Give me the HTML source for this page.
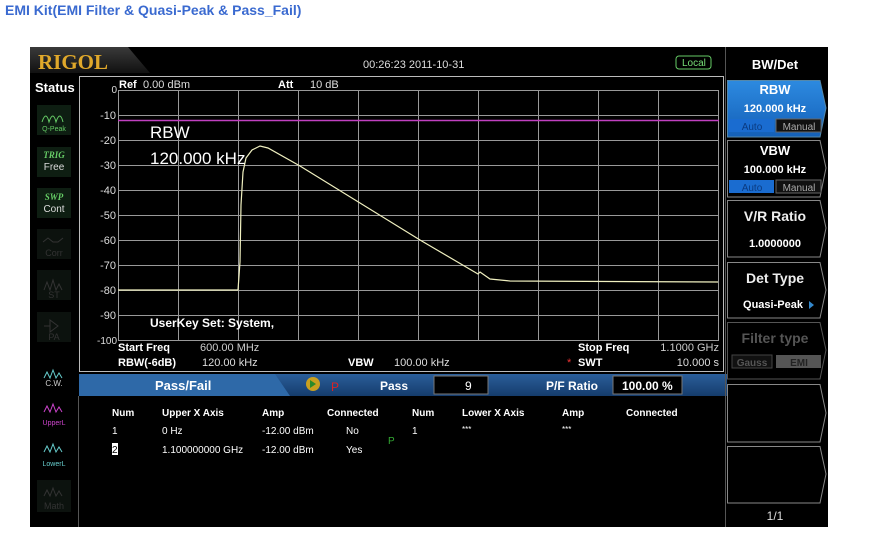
<!DOCTYPE html>
<html><head><meta charset="utf-8"><style>
body{margin:0;background:#fff;width:872px;height:548px;overflow:hidden;font-family:"Liberation Sans",sans-serif}
</style></head><body>
<svg width="872" height="548" xmlns="http://www.w3.org/2000/svg" font-family="Liberation Sans, sans-serif">
<rect width="872" height="548" fill="#fff"/>
<text x="5" y="15" font-size="14" font-weight="bold" fill="#3a6ad0">EMI  Kit(EMI Filter &amp; Quasi-Peak &amp; Pass_Fail)</text>
<rect x="30" y="47" width="798" height="480" fill="#000"/>
<defs>
<linearGradient id="tb" x1="0" y1="0" x2="0" y2="1"><stop offset="0" stop-color="#3a3a3a"/><stop offset="1" stop-color="#111"/></linearGradient>
<linearGradient id="bl" x1="0" y1="0" x2="0" y2="1"><stop offset="0" stop-color="#2a5e9a"/><stop offset="1" stop-color="#153c6c"/></linearGradient>
<linearGradient id="btn" x1="0" y1="0" x2="0" y2="1"><stop offset="0" stop-color="#2d8ae0"/><stop offset="1" stop-color="#1460b8"/></linearGradient>
</defs>
<path d="M30 47 H128 L150 73 H30Z" fill="url(#tb)"/>
<text x="38" y="69" font-family="Liberation Serif,serif" font-size="21" font-weight="bold" fill="#e0a82a">RIGOL</text>
<text x="363" y="68" font-size="11" fill="#ddd">00:26:23 2011-10-31</text>
<rect x="676" y="56" width="35" height="13" rx="3" fill="none" stroke="#6c6" stroke-width="1"/>
<text x="682" y="66" font-size="10" fill="#7d7">Local</text>
<text x="35" y="92" font-size="13" font-weight="bold" fill="#fff">Status</text>
<g font-size="9" text-anchor="middle">
<rect x="37" y="105" width="34" height="30" fill="#0e1e12"/>
<path d="M42 122 q4-12 7 0 q4-12 7 0 q4-12 7 0" stroke="#6c6" fill="none"/><text x="54" y="131" fill="#6c6" font-size="7">Q-Peak</text>
<rect x="37" y="147" width="34" height="30" fill="#0e1e12"/>
<text x="54" y="158" fill="#6c6" font-style="italic" font-weight="bold" font-family="Liberation Serif,serif">TRIG</text><text x="54" y="170" fill="#ddd" font-size="10">Free</text>
<rect x="37" y="188" width="34" height="30" fill="#0e1e12"/>
<text x="54" y="200" fill="#6c6" font-style="italic" font-weight="bold" font-family="Liberation Serif,serif">SWP</text><text x="54" y="212" fill="#ddd" font-size="10">Cont</text>
<rect x="37" y="229" width="34" height="30" fill="#0c120e"/><text x="54" y="256" fill="#333">Corr</text><path d="M43 242 l5-4 5 4 5 0 5-4" stroke="#333" fill="none"/>
<rect x="37" y="270" width="34" height="30" fill="#0c120e"/><text x="54" y="298" fill="#333">ST</text><path d="M44 290 l3-8 3 8 3-10 3 10 3-6 3 6" stroke="#333" fill="none"/>
<rect x="37" y="312" width="34" height="30" fill="#0c120e"/><text x="54" y="340" fill="#333">PA</text><path d="M44 326 h6 v-6 l8 6 -8 6 v-6" stroke="#333" fill="none"/>
<path d="M44 378 l3-6 3 6 3-8 3 8 3-5 3 5" stroke="#6cc" fill="none"/><text x="54" y="386" fill="#ccc" font-size="8">C.W.</text>
<path d="M44 412 l3-6 3 6 3-8 3 8 3-5 3 5" stroke="#c4c" fill="none"/><text x="54" y="425" fill="#c4c" font-size="7">UpperL</text>
<path d="M44 452 l3-6 3 6 3-8 3 8 3-5 3 5" stroke="#6cc" fill="none"/><text x="54" y="466" fill="#6cc" font-size="7">LowerL</text>
<rect x="37" y="480" width="34" height="32" fill="#0c120e"/><path d="M44 496 l3-6 3 6 3-8 3 8 3-5 3 5" stroke="#333" fill="none"/><text x="54" y="509" fill="#333">Math</text>
</g>
<rect x="79.5" y="76.5" width="644" height="295" fill="none" stroke="#bbb"/>
<g stroke="#999" stroke-width="1">
<path d="M118.5 90V340 M178.5 90V340 M238.5 90V340 M298.5 90V340 M358.5 90V340 M418.5 90V340 M478.5 90V340 M538.5 90V340 M598.5 90V340 M658.5 90V340 M718.5 90V340"/>
<path d="M118 90.5H719 M118 115.5H719 M118 140.5H719 M118 165.5H719 M118 190.5H719 M118 215.5H719 M118 240.5H719 M118 265.5H719 M118 290.5H719 M118 315.5H719 M118 340.5H719"/>
</g>
<line x1="118" y1="120.5" x2="719" y2="120.5" stroke="#c040c0" stroke-width="1.5"/>
<polyline fill="none" stroke="#f0f0c0" stroke-width="1.2" points="118,290 238,290 240,262 241,205 243,172 246,158 252,150 260,146 268,148 300,166 420,240 478,274 480,272 490,279 510,281 718,282"/>
<g fill="#ddd" font-size="11" text-anchor="end">
<text x="117" y="93" font-size="10">0</text><text x="116" y="119">-10</text><text x="116" y="144">-20</text><text x="116" y="169">-30</text><text x="116" y="194">-40</text><text x="116" y="219">-50</text><text x="116" y="244">-60</text><text x="116" y="269">-70</text><text x="116" y="294">-80</text><text x="116" y="319">-90</text><text x="117" y="344" font-size="10">-100</text>
</g>
<g fill="#fff" font-size="11">
<text x="119" y="88" font-weight="bold">Ref</text><text x="143" y="88" fill="#ddd">0.00 dBm</text>
<text x="278" y="88" font-weight="bold">Att</text><text x="310" y="88" fill="#ddd">10 dB</text>
<text x="150" y="138" font-size="17">RBW</text><text x="150" y="164" font-size="17">120.000 kHz</text>
<text x="150" y="327" font-weight="bold" font-size="12">UserKey Set:  System,</text>
<text x="118" y="351" font-weight="bold">Start Freq</text><text x="200" y="351" fill="#ccc">600.00 MHz</text>
<text x="118" y="366" font-weight="bold">RBW(-6dB)</text><text x="202" y="366" fill="#ddd">120.00 kHz</text>
<text x="348" y="366" font-weight="bold">VBW</text><text x="394" y="366" fill="#ddd">100.00 kHz</text>
<text x="578" y="351" font-weight="bold">Stop Freq</text><text x="719" y="351" fill="#ccc" text-anchor="end">1.1000 GHz</text>
<text x="567" y="366" fill="#e33">*</text><text x="578" y="366" font-weight="bold">SWT</text><text x="719" y="366" fill="#ddd" text-anchor="end">10.000 s</text>
</g>
<rect x="79" y="374" width="648" height="22" fill="url(#bl)"/>
<path d="M79 374 H275 L290 396 H79Z" fill="#2e69a8"/>
<text x="155" y="390" font-size="13" font-weight="bold" fill="#fff">Pass/Fail</text>
<circle cx="313" cy="384" r="7" fill="#c8a020"/><path d="M310 380 l6 4 -6 4z" fill="#2a8a2a"/>
<text x="331" y="391" font-size="12" fill="#d22">P</text>
<text x="380" y="390" font-size="12" font-weight="bold" fill="#fff">Pass</text>
<rect x="434" y="376" width="54" height="18" fill="#000" stroke="#777"/><text x="465" y="390" font-size="12" fill="#fff">9</text>
<text x="546" y="390" font-size="12" font-weight="bold" fill="#fff">P/F Ratio</text>
<rect x="613" y="376" width="69" height="18" fill="#000" stroke="#777"/><text x="622" y="390" font-size="12" font-weight="bold" fill="#fff">100.00 %</text>
<g fill="#fff" font-size="10">
<g font-weight="bold"><text x="112" y="416">Num</text><text x="162" y="416">Upper X Axis</text><text x="262" y="416">Amp</text><text x="327" y="416">Connected</text><text x="412" y="416">Num</text><text x="462" y="416">Lower X Axis</text><text x="562" y="416">Amp</text><text x="626" y="416">Connected</text></g>
<text x="112" y="434">1</text><text x="162" y="434">0 Hz</text><text x="262" y="434">-12.00 dBm</text><text x="346" y="434">No</text><text x="412" y="434">1</text><text x="462" y="432" font-size="8">***</text><text x="562" y="432" font-size="8">***</text>
<rect x="112" y="443" width="6" height="12" fill="#fff"/><text x="112" y="453" fill="#000">2</text><text x="162" y="453">1.100000000 GHz</text><text x="262" y="453">-12.00 dBm</text><text x="346" y="453">Yes</text>
<text x="388" y="444" fill="#3a3">P</text>
</g>
<line x1="78.5" y1="396" x2="78.5" y2="527" stroke="#555"/>
<line x1="725.5" y1="47" x2="725.5" y2="527" stroke="#555"/>
<text x="775" y="69" font-size="13" font-weight="bold" fill="#fff" text-anchor="middle">BW/Det</text>
<g stroke="#888" fill="#000">
<path d="M727.5 80.5H820L826 108 820 137H727.5Z" fill="url(#btn)" stroke="#58a"/>
<path d="M727.5 140.5H820L826 168 820 197H727.5Z"/>
<path d="M727.5 200.5H820L826 228 820 257H727.5Z"/>
<path d="M727.5 262.5H820L826 290 820 318H727.5Z"/>
<path d="M727.5 322.5H820L826 350 820 379H727.5Z" stroke="#555"/>
<path d="M727.5 384.5H820L826 413 820 442H727.5Z"/>
<path d="M727.5 446.5H820L826 474 820 503H727.5Z"/>
</g>
<g text-anchor="middle" font-weight="bold" fill="#fff">
<text x="775" y="94" font-size="13">RBW</text><text x="775" y="112" font-size="11">120.000 kHz</text>
<rect x="729" y="119" width="45" height="13" fill="#1a6cd0"/><text x="752" y="130" font-size="10" font-weight="normal" fill="#0a3a80">Auto</text>
<rect x="776" y="119" width="45" height="13" fill="#111" stroke="#666"/><text x="799" y="130" font-size="10" font-weight="normal" fill="#aaa">Manual</text>
<text x="775" y="155" font-size="13">VBW</text><text x="775" y="173" font-size="11">100.000 kHz</text>
<rect x="729" y="180" width="45" height="13" fill="#1a6cd0"/><text x="752" y="191" font-size="10" font-weight="normal" fill="#0a3a80">Auto</text>
<rect x="776" y="180" width="45" height="13" fill="#111" stroke="#666"/><text x="799" y="191" font-size="10" font-weight="normal" fill="#aaa">Manual</text>
<text x="775" y="221" font-size="14" fill="#eee">V/R Ratio</text><text x="775" y="247" font-size="11">1.0000000</text>
<text x="775" y="283" font-size="14" fill="#eee">Det Type</text><text x="773" y="308" font-size="11">Quasi-Peak</text>
<path d="M809 301 l5 4 -5 4z" fill="#38c"/>
<text x="775" y="343" font-size="14" fill="#555">Filter type</text>
<rect x="732" y="355" width="40" height="13" fill="#111" stroke="#444"/><text x="752" y="366" font-size="10" fill="#555">Gauss</text>
<rect x="776" y="355" width="45" height="13" fill="#555"/><text x="799" y="366" font-size="10" fill="#222">EMI</text>
<text x="775" y="520" font-size="12" font-weight="normal" fill="#ddd">1/1</text>
</g>
</svg>
</body></html>
